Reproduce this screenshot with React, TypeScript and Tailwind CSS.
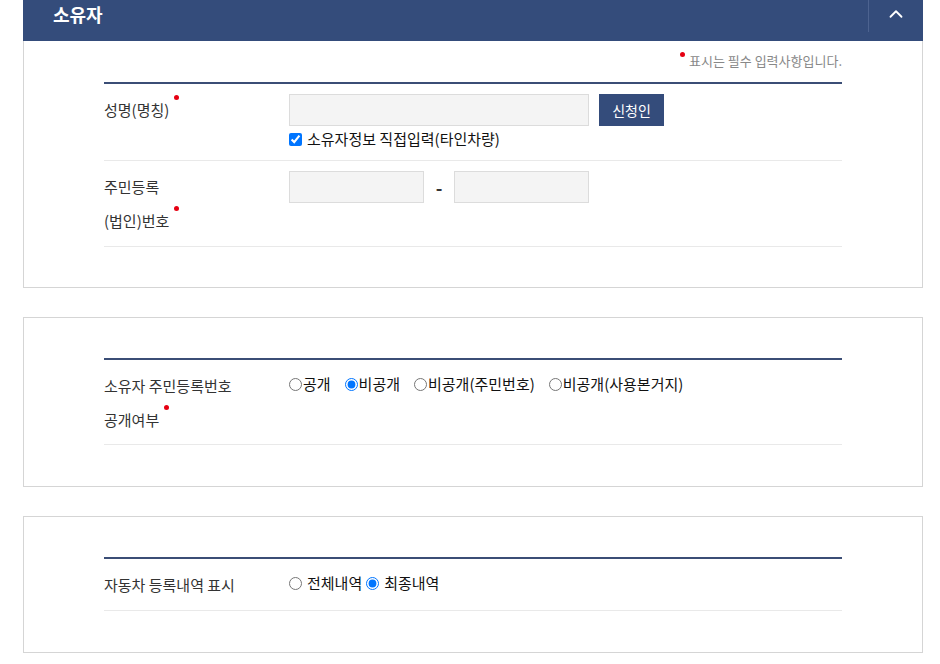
import { ChevronUp } from "lucide-react";

const font = { fontFamily: '"Noto Sans CJK KR", "Noto Sans", sans-serif' };

function Dot() {
  return <span className="inline-block align-top mt-[2px] ml-[5px] w-[5px] h-[5px] rounded-full bg-[#e60012]" />;
}

function Row({ label, children, pb = "pb-[8px]" }: { label: React.ReactNode; children: React.ReactNode; pb?: string }) {
  return (
    <div className={`flex border-b border-[#e9e9e9] pt-[9px] ${pb}`}>
      <div className="w-[185px] shrink-0 text-[15px] leading-[34px] text-[#333]">{label}</div>
      <div className="flex-1 min-w-0">{children}</div>
    </div>
  );
}

function Radio({ checked, name }: { checked?: boolean; name: string }) {
  return (
    <input
      type="radio"
      name={name}
      defaultChecked={checked}
      className="m-0 w-[13px] h-[13px] accent-[#0075ff] align-middle"
    />
  );
}

export default function App() {
  return (
    <div className="w-[940px] min-h-[664px] bg-white" style={font}>
      <div className="ml-[23px] w-[900px]">
        {/* 소유자 */}
        <section>
          <div className="h-[41px] bg-[#344c7b] flex items-start">
            <div className="flex-1 h-[27px] flex items-center pl-[30px]">
              <h2 className="text-[18px] font-bold text-white leading-none">소유자</h2>
            </div>
            <div className="w-[55px] h-[32px] border-l border-[#4d6390] flex items-start justify-center pt-[3px]">
              <ChevronUp className="w-[22px] h-[22px] text-white" strokeWidth={2} />
            </div>
          </div>
          <div className="border-x border-b border-[#d5d5d5] px-[80px] pt-[10px] pb-[40px]">
            <p className="text-right text-[13px] leading-[20px] text-[#888] mb-[11px]">
              <span className="inline-block align-top mt-[1px] mr-[4px] w-[5px] h-[5px] rounded-full bg-[#e60012]" />
              표시는 필수 입력사항입니다.
            </p>
            <div className="border-t-2 border-[#3b4e76]">
              <Row
                label={
                  <>
                    성명(명칭)
                    <Dot />
                  </>
                }
              >
                <div className="flex items-center gap-[10px] pt-[1px]">
                  <input className="w-[300px] h-[32px] bg-[#f4f4f4] border border-[#dcdcdc] outline-none" />
                  <button className="w-[65px] h-[32px] bg-[#344c7b] text-white text-[14px]">신청인</button>
                </div>
                <label className="flex items-center mt-[3px] mb-[3px] text-[15px] leading-[20px] text-[#111]">
                  <input type="checkbox" defaultChecked className="m-0 mr-[5px] w-[13px] h-[13px] accent-[#0075ff]" />
                  소유자정보 직접입력(타인차량)
                </label>
              </Row>
              <Row
                label={
                  <>
                    주민등록
                    <br />
                    (법인)번호
                    <Dot />
                  </>
                }
              >
                <div className="flex items-center pt-[1px]">
                  <input className="w-[135px] h-[32px] bg-[#f4f4f4] border border-[#dcdcdc] outline-none" />
                  <span className="w-[30px] text-center text-[18px] font-bold text-[#333]">-</span>
                  <input className="w-[135px] h-[32px] bg-[#f4f4f4] border border-[#dcdcdc] outline-none" />
                </div>
              </Row>
            </div>
          </div>
        </section>

        {/* 공개여부 */}
        <section className="mt-[29px] border border-[#d5d5d5] px-[80px] pt-[40px] pb-[41px]">
          <div className="border-t-2 border-[#3b4e76]">
            <Row
              pb="pb-[7px]"
              label={
                <>
                  소유자 주민등록번호
                  <br />
                  공개여부
                  <Dot />
                </>
              }
            >
              <div className="flex items-center gap-[14px] text-[15px] leading-[30px] text-[#111]">
                <label className="flex items-center">
                  <Radio name="open" />
                  <span className="ml-[1px]">공개</span>
                </label>
                <label className="flex items-center">
                  <Radio name="open" checked />
                  <span className="ml-[1px]">비공개</span>
                </label>
                <label className="flex items-center">
                  <Radio name="open" />
                  <span className="ml-[1px]">비공개(주민번호)</span>
                </label>
                <label className="flex items-center">
                  <Radio name="open" />
                  <span className="ml-[1px]">비공개(사용본거지)</span>
                </label>
              </div>
            </Row>
          </div>
        </section>

        {/* 등록내역 */}
        <section className="mt-[29px] border border-[#d5d5d5] px-[80px] pt-[40px] pb-[41px]">
          <div className="border-t-2 border-[#3b4e76]">
            <Row pb="pb-[8px]" label="자동차 등록내역 표시">
              <div className="flex items-center text-[15px] leading-[30px] text-[#111]">
                <label className="flex items-center">
                  <Radio name="hist" />
                  <span className="ml-[5px]">전체내역</span>
                </label>
                <label className="flex items-center ml-[4px]">
                  <Radio name="hist" checked />
                  <span className="ml-[5px]">최종내역</span>
                </label>
              </div>
            </Row>
          </div>
        </section>
      </div>
    </div>
  );
}
